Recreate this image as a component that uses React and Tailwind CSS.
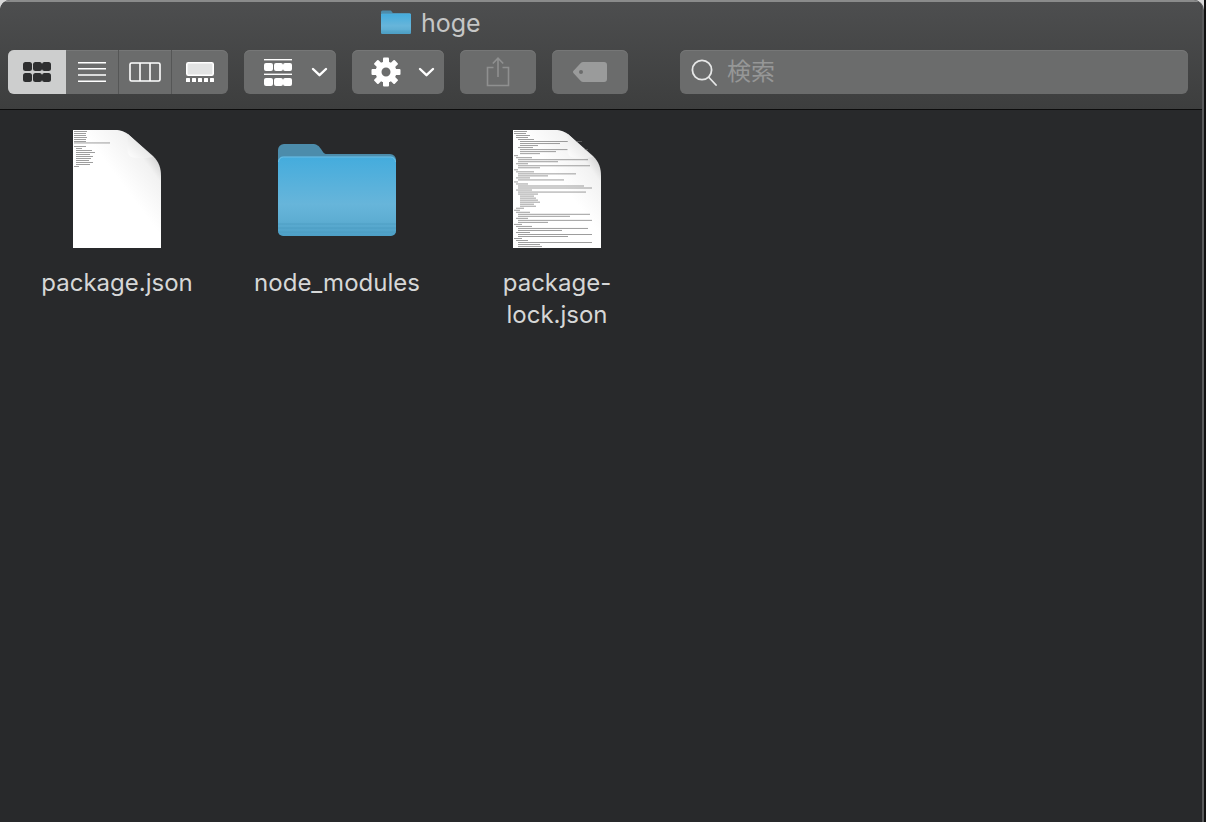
const Gear = () => (
  <svg width="32" height="32" viewBox="0 0 32 32" fill="#fff">
    {[0, 45, 90, 135, 180, 225, 270, 315].map((a) => (
      <rect key={a} x="13" y="1.5" width="6" height="7" rx="1" transform={`rotate(${a} 16 16)`} />
    ))}
    <circle cx="16" cy="16" r="7.5" fill="none" stroke="#fff" strokeWidth="6" />
  </svg>
);

const Chevron = () => (
  <svg width="17" height="10" viewBox="0 0 17 10" fill="none" stroke="#fff" strokeWidth="2.4" strokeLinecap="round" strokeLinejoin="round">
    <path d="M2 2l6.5 6.2L15 2" />
  </svg>
);

const GridIcon = () => (
  <svg width="28" height="20" viewBox="0 0 28 20" fill="#2e2f30">
    {[0, 10, 19].map((x) => (
      <g key={x}>
        <rect x={x} y="0" width="9" height="9" rx="2.5" />
        <rect x={x} y="11" width="9" height="9" rx="2.5" />
      </g>
    ))}
  </svg>
);

const ListIcon = () => (
  <svg width="28" height="20" viewBox="0 0 28 20" stroke="#fff" strokeWidth="1.4">
    <path d="M0 .7h28M0 6.7h28M0 13h28M0 19.3h28" />
  </svg>
);

const ColumnIcon = () => (
  <svg width="32" height="20" viewBox="0 0 32 20" fill="none" stroke="#fff" strokeWidth="1.6">
    <rect x="1" y="1" width="30" height="18" rx="1.5" />
    <path d="M11 1v18M21 1v18" />
  </svg>
);

const GalleryIcon = () => (
  <svg width="28" height="20" viewBox="0 0 28 20" fill="#fff">
    <rect x=".8" y=".8" width="26.4" height="12.4" rx="1.5" fill="#e2e3e3" stroke="#fff" strokeWidth="1.6" />
    {[0, 6, 12, 18, 24].map((x) => (
      <rect key={x} x={x} y="16" width="4" height="4" rx=".6" />
    ))}
  </svg>
);

const ArrangeIcon = () => (
  <svg width="28" height="27" viewBox="0 0 28 27" fill="#fff">
    <rect x="0" y="0" width="28" height="1.4" />
    <rect x="0" y="14.6" width="28" height="1.4" />
    {[0, 10, 19].map((x) => (
      <g key={x}>
        <rect x={x} y="4" width="9" height="8" rx="2" />
        <rect x={x} y="19" width="9" height="8" rx="2" />
      </g>
    ))}
  </svg>
);

const ShareIcon = () => (
  <svg width="24" height="30" viewBox="0 0 24 30" fill="none" stroke="#8f9090" strokeWidth="1.6">
    <path d="M7.5 10.5H1.5v18h21v-18h-6" />
    <path d="M12 20V1.5M6.8 6.5L12 1.2l5.2 5.3" />
  </svg>
);

const TagIcon = () => (
  <svg width="34" height="20" viewBox="0 0 34 20">
    <path fillRule="evenodd" fill="#9a9b9b" d="M10 0h21a3 3 0 0 1 3 3v14a3 3 0 0 1-3 3H10a3 3 0 0 1-2-.8L.8 11.5a2 2 0 0 1 0-3L8 .8A3 3 0 0 1 10 0zM8 8a2 2 0 1 0 0 4 2 2 0 0 0 0-4z" />
  </svg>
);

const SearchIcon = () => (
  <svg width="26" height="27" viewBox="0 0 26 27" fill="none" stroke="#e6e7e7" strokeWidth="1.8" strokeLinecap="round">
    <circle cx="11" cy="11" r="9.6" />
    <path d="M18 18.5l7 7.5" />
  </svg>
);

const Folder = ({ id, width, height }) => (
  <svg width={width} height={height} viewBox="0 0 118 94">
    <defs>
      <linearGradient id={`${id}-front`} x1="0" y1="0" x2="0" y2="1">
        <stop offset="0" stopColor="#44acdd" />
        <stop offset=".6" stopColor="#67b5da" />
        <stop offset=".8" stopColor="#5eaed3" />
        <stop offset="1" stopColor="#4d9fc6" />
      </linearGradient>
    </defs>
    <path fill="#4c8cab" d="M0 8a6 6 0 0 1 6-6h28c5 0 7 2 9 5l2 3c1 1.500 2 2 4 2h63a6 6 0 0 1 6 6v40H0z" />
    <rect x="0" y="14.500" width="118" height="79.500" rx="5" fill={`url(#${id}-front)`} />
    <path fill="none" stroke="#8ccbe8" strokeWidth=".8" opacity=".7" d="M.5 20a5 5 0 0 1 5-5h107a5 5 0 0 1 5 5" />
    <path stroke="#4b9ac0" strokeWidth="1" opacity=".7" d="M0 82h118M0 86h118M0 90h118" />
  </svg>
);

const Doc = ({ id, lines }) => (
  <svg width="88" height="118" viewBox="0 0 88 118">
    <defs>
      <linearGradient id={`${id}-page`} x1="1" y1="0" x2=".55" y2=".45">
        <stop offset=".25" stopColor="#c9c9c9" />
        <stop offset=".5" stopColor="#f2f2f2" />
        <stop offset="1" stopColor="#ffffff" />
      </linearGradient>
      <linearGradient id={`${id}-fold`} x1="0" y1="1" x2="1" y2="0">
        <stop offset="0" stopColor="#ffffff" />
        <stop offset="1" stopColor="#d6d6d6" />
      </linearGradient>
    </defs>
    <path fill={`url(#${id}-page)`} d="M0 0h42c6 0 10 1.500 14 5l24 21c6 6 8 12 8 20v72H0z" />
    {lines.map(([x, y, w], i) => (
      <rect key={i} x={x} y={y} width={w} height=".9" fill="#6f6f6f" opacity=".75" />
    ))}
    <path fill={`url(#${id}-fold)`} d="M55 4l25 23c-8 1.500-15 1.500-20 .5-4-1-5.500-4-5.500-8z" />
  </svg>
);

// thumbnail text of package.json
const shortLines = [
  [1, 1, 13], [1, 3, 12], [1, 5, 12], [1, 7, 13], [1, 9, 12], [1, 11, 12], [1, 12.5, 36],
  [1, 16, 12], [3, 18, 6], [3, 20, 16], [3, 22, 19], [3, 24, 14], [3, 26, 17], [3, 28, 15],
  [3, 30, 13], [3, 32, 17], [3, 34, 14], [1, 36, 5],
];

// thumbnail text of package-lock.json
const lockWidths = [
  [1, 13], [1, 12], [3, 14], [3, 12], [5, 16], [7, 62], [7, 40], [7, 18], [5, 15], [7, 68], [7, 36], [7, 20],
  [1, 4], [3, 16], [5, 70], [5, 40], [3, 12], [5, 72], [5, 22], [1, 4], [3, 18], [5, 58], [5, 30], [3, 14],
  [5, 46], [1, 4], [3, 12], [5, 66], [5, 74], [3, 16], [5, 68], [5, 20], [7, 14], [7, 16], [7, 18], [7, 20],
  [7, 14], [7, 16], [3, 8], [1, 6], [3, 14], [5, 72], [5, 52], [3, 12], [5, 74], [5, 30], [1, 8], [3, 16],
  [5, 70], [5, 44], [3, 14], [5, 74], [5, 50], [1, 8], [3, 12], [5, 74], [5, 22], [5, 24],
];
const lockLines = lockWidths.map(([x, w], i) => [x, 1 + i * 2.02, w]);

const files = [
  { name: 'package.json', kind: 'doc', id: 'pkg', lines: shortLines },
  { name: 'node_modules', kind: 'folder', id: 'mods' },
  { name: 'package-lock.json', kind: 'doc', id: 'lock', lines: lockLines },
];

const App = () => {
  const btn = 'flex items-center h-[44px] rounded-[6px] bg-[#6b6c6c] shadow-[inset_0_1px_0_#767777]';

  return (
    <div className="flex w-[1206px] h-[822px] overflow-hidden bg-[#d8d8d8]">
      {/* Window */}
      <div className="flex flex-col w-[1204px] rounded-t-[10px] overflow-hidden border-r-2 border-[#58595a] bg-[#28292b]" style={{ fontFamily: 'Inter, "Noto Sans CJK JP", sans-serif' }}>
        {/* Toolbar */}
        <div className="shrink-0 h-[110px] border-t-2 border-b border-t-[#8a8b8b] border-b-[#0c0c0c] bg-gradient-to-b from-[#4d4e4f] to-[#3d3e3e] flex flex-col">
          <div className="h-[48px] pl-[381px] pt-[6px] flex items-start gap-[10px]">
            <div className="mt-[2px]">
              <Folder id="title" width={30} height={24} />
            </div>
            <span className="text-[25px] leading-[30px] text-[#c5c6c6]">hoge</span>
          </div>
          <div className="flex items-center pl-[8px] pr-[14px]">
            {/* View modes */}
            <div className={`${btn} w-[220px] overflow-hidden`}>
              <div className="w-[58px] h-full bg-[#cdcece] flex items-center justify-center"><GridIcon /></div>
              <div className="w-[52px] h-full flex items-center justify-center"><ListIcon /></div>
              <div className="w-[54px] h-full flex items-center justify-center border-x border-[#555656]"><ColumnIcon /></div>
              <div className="flex-1 h-full flex items-center justify-center"><GalleryIcon /></div>
            </div>
            <div className={`${btn} w-[92px] ml-[16px] pl-[20px] gap-[19px]`}>
              <ArrangeIcon />
              <Chevron />
            </div>
            <div className={`${btn} w-[92px] ml-[16px] pl-[18px] gap-[16px]`}>
              <Gear />
              <Chevron />
            </div>
            <div className={`${btn} w-[76px] ml-[16px] justify-center`}><ShareIcon /></div>
            <div className={`${btn} w-[76px] ml-[16px] justify-center`}><TagIcon /></div>
            <div className={`${btn} flex-1 ml-[52px] pl-[11px] gap-[10px]`}>
              <SearchIcon />
              <span className="text-[24px] leading-none text-[#969797]">検索</span>
            </div>
          </div>
        </div>

        {/* File grid */}
        <div className="flex-1 flex items-start pl-[7px] pt-[20px]">
          {files.map((f) => (
            <div key={f.name} className="w-[220px] flex flex-col items-center">
              <div className="h-[118px] flex items-center justify-center">
                {f.kind === 'doc' ? <Doc id={f.id} lines={f.lines} /> : <Folder id={f.id} width={118} height={94} />}
              </div>
              <div className="mt-[19px] w-[130px] text-center text-[24px] leading-[32px] text-[#d6d7d7] [overflow-wrap:normal] flex justify-center flex-wrap">
                {f.name === 'package-lock.json' ? (
                  <>
                    <span className="whitespace-nowrap">package-</span>
                    <span className="whitespace-nowrap">lock.json</span>
                  </>
                ) : (
                  <span className="whitespace-nowrap">{f.name}</span>
                )}
              </div>
            </div>
          ))}
        </div>
      </div>

      {/* Desktop sliver behind the window */}
      <div className="w-[2px] h-full bg-[#111]" />
    </div>
  );
};

export default App;
